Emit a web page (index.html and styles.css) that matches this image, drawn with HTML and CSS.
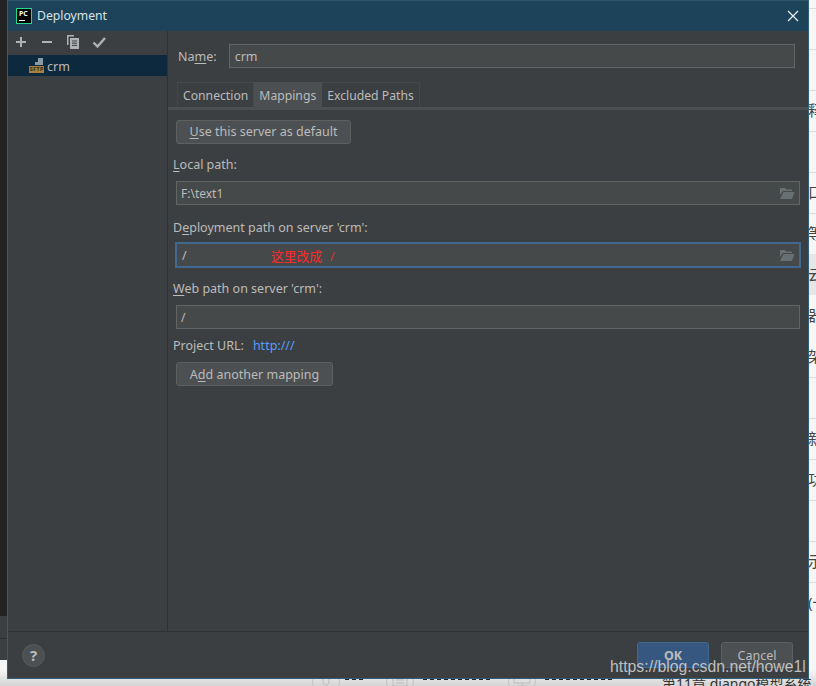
FILE: index.html
```html
<!DOCTYPE html>
<html lang="zh">

<head>
    <meta charset="UTF-8">
    <meta name="viewport" content="width=device-width, initial-scale=1.0">
    <title>Deployment</title>
    <link rel="stylesheet" href="styles.css">
</head>

<body>
    <div class="desktop">
        <!-- page behind the dialog, only its edges show -->
        <div class="behind-left"></div>
        <div class="behind-band"></div>
        <div class="behind-line" style="top:8px"></div>
        <div class="behind-line" style="top:49px"></div>
        <div class="behind-line" style="top:90px"></div>
        <div class="behind-line" style="top:131px"></div>
        <div class="behind-line" style="top:172px"></div>
        <div class="behind-line" style="top:213px"></div>
        <div class="behind-line" style="top:377px"></div>
        <div class="behind-line" style="top:418px"></div>
        <div class="behind-line" style="top:459px"></div>
        <div class="behind-line" style="top:500px"></div>
        <div class="behind-line" style="top:541px"></div>
        <div class="behind-line" style="top:582px"></div>
        <span class="behind-char" style="top:102px">释</span>
        <span class="behind-char" style="top:184px">口</span>
        <span class="behind-char" style="top:225px">等</span>
        <span class="behind-char" style="top:266px">云</span>
        <span class="behind-char" style="top:307px">器</span>
        <span class="behind-char" style="top:348px">架</span>
        <span class="behind-char" style="top:430px">新</span>
        <span class="behind-char" style="top:471px">功</span>
        <span class="behind-char" style="top:553px">示</span>
        <span class="behind-char" style="top:594px">(一</span>
        <span class="behind-title">第11章 django模型系统</span>
        <div class="behind-round" style="left:312px">
            <svg width="26" height="26" viewBox="0 0 26 26">
                <path d="M10 8 V13 A3 3 0 0 0 16 13 V8" stroke="#bdbdbd" fill="none" />
            </svg>
        </div>
        <div class="behind-round" style="left:386px">
            <svg width="26" height="26" viewBox="0 0 26 26">
                <path d="M6 7 H20 V17 H6 Z M9 11 H17 M9 14 H17" stroke="#bdbdbd" fill="none" />
            </svg>
        </div>
        <div class="behind-round" style="left:508px">
            <svg width="26" height="26" viewBox="0 0 26 26">
                <path d="M5 7 H21 V14 H5 Z M13 14 V17 M8 17 H18" stroke="#bdbdbd" fill="none" />
            </svg>
        </div>
        <div class="behind-ink" style="left:345px;width:19px"></div>
        <div class="behind-ink" style="left:423px;width:69px"></div>
        <div class="behind-ink" style="left:545px;width:68px"></div>

        <div class="dialog">
            <div class="titlebar">
                <div class="app-icon"><span>PC</span></div>
                <span class="title">Deployment</span>
                <svg class="close" width="12" height="12" viewBox="0 0 12 12">
                    <path d="M1 1 L11 11 M11 1 L1 11" stroke="#e8eef2" stroke-width="1.3" fill="none" />
                </svg>
            </div>

            <div class="content">
                <div class="sidebar">
                    <div class="toolbar">
                        <svg width="14" height="14" viewBox="0 0 14 14">
                            <path d="M7 2 V12 M2 7 H12" stroke="#afb1b3" stroke-width="2" fill="none" />
                        </svg>
                        <svg width="14" height="14" viewBox="0 0 14 14">
                            <path d="M2 7 H12" stroke="#afb1b3" stroke-width="2" fill="none" />
                        </svg>
                        <svg width="14" height="14" viewBox="0 0 14 14">
                            <path d="M1 0 H8 V1.5 H2.5 V10 H1 Z" fill="#afb1b3" />
                            <path d="M4 3 H13 V14 H4 Z" fill="#afb1b3" />
                            <path d="M6 6 H11 M6 8.2 H11 M6 10.4 H11" stroke="#3c3f41" stroke-width="1" fill="none" />
                        </svg>
                        <svg width="14" height="14" viewBox="0 0 14 14">
                            <path d="M1.5 7.5 L5.5 11.5 L13 3" stroke="#afb1b3" stroke-width="2.4" fill="none" />
                        </svg>
                    </div>
                    <div class="server-row">
                        <div class="sftp-icon">
                            <svg width="15" height="8" viewBox="0 0 15 8">
                                <path d="M2 7 H6 V4 H9 V0 H14 V7 Z" fill="#8a9aa5" />
                            </svg>
                            <span>SFTP</span>
                        </div>
                        <span class="server-name">crm</span>
                    </div>
                </div>

                <div class="main">
                    <div class="name-row">
                        <label>Na<u>m</u>e:</label>
                        <div class="field name-field">crm</div>
                    </div>

                    <div class="tabs">
                        <div class="tab">Connection</div>
                        <div class="tab active">Mappings</div>
                        <div class="tab">Excluded Paths</div>
                    </div>
                    <div class="tab-line"></div>

                    <div class="form">
                        <button class="btn default-btn"><u>U</u>se this server as default</button>

                        <label class="local-label"><u>L</u>ocal path:</label>
                        <div class="field path-text">
                            F:\text1
                            <svg class="folder" width="16" height="13" viewBox="0 0 16 13">
                                <path d="M1 1 H6 L7 2.5 H13 V4 H4 L1 8 Z" fill="#687074" />
                                <path d="M4.5 5 H15.5 L13 12 H1 Z" fill="#687074" />
                            </svg>
                        </div>

                        <label class="deploy-label">D<u>e</u>ployment path on server 'crm':</label>
                        <div class="field focused">
                            /
                            <span class="note">这里改成<span class="note-slash">/</span></span>
                            <svg class="folder" width="16" height="13" viewBox="0 0 16 13">
                                <path d="M1 1 H6 L7 2.5 H13 V4 H4 L1 8 Z" fill="#687074" />
                                <path d="M4.5 5 H15.5 L13 12 H1 Z" fill="#687074" />
                            </svg>
                        </div>

                        <label class="web-label"><u>W</u>eb path on server 'crm':</label>
                        <div class="field path-text">/</div>

                        <div class="url-row">
                            <span>Project URL:</span>
                            <a>http:///</a>
                        </div>

                        <button class="btn add-btn">A<u>d</u>d another mapping</button>
                    </div>
                </div>
            </div>

            <div class="footer">
                <div class="help">?</div>
                <div class="actions">
                    <button class="btn ok-btn">OK</button>
                    <button class="btn cancel-btn">Cancel</button>
                </div>
            </div>
        </div>

        <span class="watermark">https://blog.csdn.net/howe1l</span>
    </div>
</body>

</html>
```

FILE: styles.css
```css
* {
    box-sizing: border-box;
}

body {
    margin: 0;
    background: #fff;
    font-family: "Noto Sans", "Noto Sans CJK SC", sans-serif;
    font-size: 12.5px;
    color: #bbbbbb;
}

u {
    text-underline-offset: 2px;
}

.desktop {
    position: relative;
    width: 816px;
    height: 686px;
    overflow: hidden;
    background: linear-gradient(180deg, #f6f6f6 0, #f6f6f6 670px, #d4d4d4 686px);
}

/* page behind */
.behind-left {
    position: absolute;
    left: 0;
    top: 0;
    width: 8px;
    height: 660px;
    background: linear-gradient(180deg, #232323 0, #232323 616px, #3c3f41 616px, #3c3f41 638px, #2c2e30 638px, #2c2e30 639px, #3c3f41 639px);
}

.behind-band {
    position: absolute;
    left: 800px;
    top: 254px;
    width: 16px;
    height: 41px;
    background: #e6e6e6;
}

.behind-line {
    position: absolute;
    left: 800px;
    width: 16px;
    height: 1px;
    background: #dcdcdc;
}

.behind-char {
    position: absolute;
    left: 808px;
    font-size: 15px;
    line-height: 16px;
    color: #444;
}

.behind-title {
    position: absolute;
    left: 662px;
    top: 675px;
    font-size: 14px;
    line-height: 18px;
    white-space: nowrap;
    color: #333;
}

.behind-round {
    position: absolute;
    top: 668px;
    width: 28px;
    height: 28px;
    border: 1px solid #c4c4c4;
    border-radius: 50%;
}

.behind-ink {
    position: absolute;
    top: 678px;
    height: 2px;
    background: repeating-linear-gradient(90deg, #222 0, #222 4px, transparent 4px, transparent 7px);
}

/* dialog */
.dialog {
    position: absolute;
    left: 7px;
    top: 0;
    width: 802px;
    height: 679px;
    display: flex;
    flex-direction: column;
    background: #3c3f41;
    border: 1px solid #2f5f7a;
    border-top: none;
}

.titlebar {
    height: 31px;
    flex-shrink: 0;
    display: flex;
    align-items: center;
    padding: 0 9px 1px 8px;
    background: #1c4359;
    border-top: 1px solid #2d566c;
}

.app-icon {
    width: 16px;
    height: 16px;
    border: 1px solid #21d789;
    background: #000;
    color: #fff;
    font-size: 7px;
    font-weight: 700;
    line-height: 9px;
    padding-left: 2px;
    position: relative;
}

.app-icon::after {
    content: '';
    position: absolute;
    left: 2px;
    bottom: 2px;
    width: 6px;
    height: 1px;
    background: #fff;
}

.title {
    margin-left: 5px;
    font-size: 12.2px;
    color: #d8e2e8;
}

.close {
    margin-left: auto;
}

.content {
    flex: 1;
    display: flex;
    min-height: 0;
}

.sidebar {
    width: 160px;
    flex-shrink: 0;
    border-right: 1px solid #2f3233;
}

.toolbar {
    height: 24px;
    display: flex;
    align-items: center;
    gap: 12px;
    padding: 0 0 2px 6px;
}

.server-row {
    height: 21px;
    display: flex;
    align-items: center;
    background: #0d293e;
    padding-left: 21px;
    color: #bbbbbb;
}

.sftp-icon {
    width: 15px;
    height: 16px;
    margin-right: 3px;
    line-height: 0;
}

.sftp-icon span {
    display: block;
    width: 15px;
    height: 7px;
    background: #a5803f;
    color: #3c3320;
    font-size: 6px;
    font-weight: 700;
    line-height: 7px;
    text-align: center;
    overflow: hidden;
}

.server-name {
    padding-top: 1px;
}

.main {
    flex: 1;
    min-width: 0;
}

.name-row {
    display: flex;
    align-items: center;
    gap: 12px;
    margin: 13px 13px 0 10px;
}

.field {
    position: relative;
    height: 24px;
    display: flex;
    align-items: center;
    padding-left: 5px;
    background: #45494a;
    border: 1px solid #646464;
}

.path-text {
    padding-left: 4px;
    font-size: 12px;
}

.name-field {
    flex: 1;
}

.folder {
    position: absolute;
    right: 4px;
    top: 5px;
}

.tabs {
    display: flex;
    margin: 14px 0 0 9px;
    height: 25px;
}

.tab {
    padding: 0 5px;
    font-size: 12.2px;
    line-height: 25px;
    border: 1px solid #45494a;
    border-bottom: none;
    border-left: none;
    color: #bbbbbb;
}

.tab:first-child {
    border-left: 1px solid #45494a;
}

.tab.active {
    background: #4b4f51;
    border-color: #4b4f51;
}

.tab-line {
    height: 3px;
    background: #4b4f51;
}

.form {
    display: flex;
    flex-direction: column;
    align-items: flex-start;
    padding: 10px 8px 0 8px;
}

.form .field {
    align-self: stretch;
}

.form label,
.url-row {
    margin-left: -3px;
    line-height: 18px;
}

.btn {
    height: 24px;
    padding: 0;
    border: 1px solid #5e6060;
    border-radius: 3px;
    background: #4c5052;
    color: #bbbbbb;
    font-family: inherit;
    font-size: 12.5px;
}

.default-btn {
    width: 175px;
    padding-bottom: 2px;
}

.local-label {
    margin-top: 12px;
    margin-bottom: 7px;
}

.deploy-label {
    margin-top: 14px;
    margin-bottom: 5px;
}

.field.focused {
    height: 26px;
    margin: 0 -1px;
    padding-left: 5px;
    border: 2px solid #41688f;
}

.note {
    position: absolute;
    left: 94px;
    color: #ff2a2a;
    font-size: 12.75px;
}

.note-slash {
    margin-left: 8px;
    color: #d93434;
}

.web-label {
    margin-top: 12px;
    margin-bottom: 7px;
}

.url-row {
    display: flex;
    gap: 9px;
    margin-top: 8px;
}

.url-row a {
    color: #589df6;
}

.add-btn {
    width: 157px;
    margin-top: 7px;
}

.footer {
    height: 47px;
    flex-shrink: 0;
    display: flex;
    align-items: center;
    justify-content: space-between;
    padding: 0 15px 0 14px;
    border-top: 1px solid #2f3233;
}

.help {
    width: 23px;
    height: 23px;
    border-radius: 50%;
    background: #4c5052;
    border: 1px solid #555a5c;
    color: #bbbbbb;
    font-size: 15px;
    font-weight: 700;
    line-height: 21px;
    text-align: center;
}

.actions {
    display: flex;
    gap: 12px;
}

.ok-btn {
    width: 72px;
    height: 26px;
    background: #365880;
    border-color: #41688f;
    font-weight: 700;
}

.cancel-btn {
    width: 72px;
    height: 26px;
}

.watermark {
    position: absolute;
    left: 610px;
    top: 657px;
    font-family: "Liberation Sans", sans-serif;
    font-size: 15.8px;
    line-height: 20px;
    color: rgba(215, 215, 215, 0.85);
    white-space: nowrap;
}
```
